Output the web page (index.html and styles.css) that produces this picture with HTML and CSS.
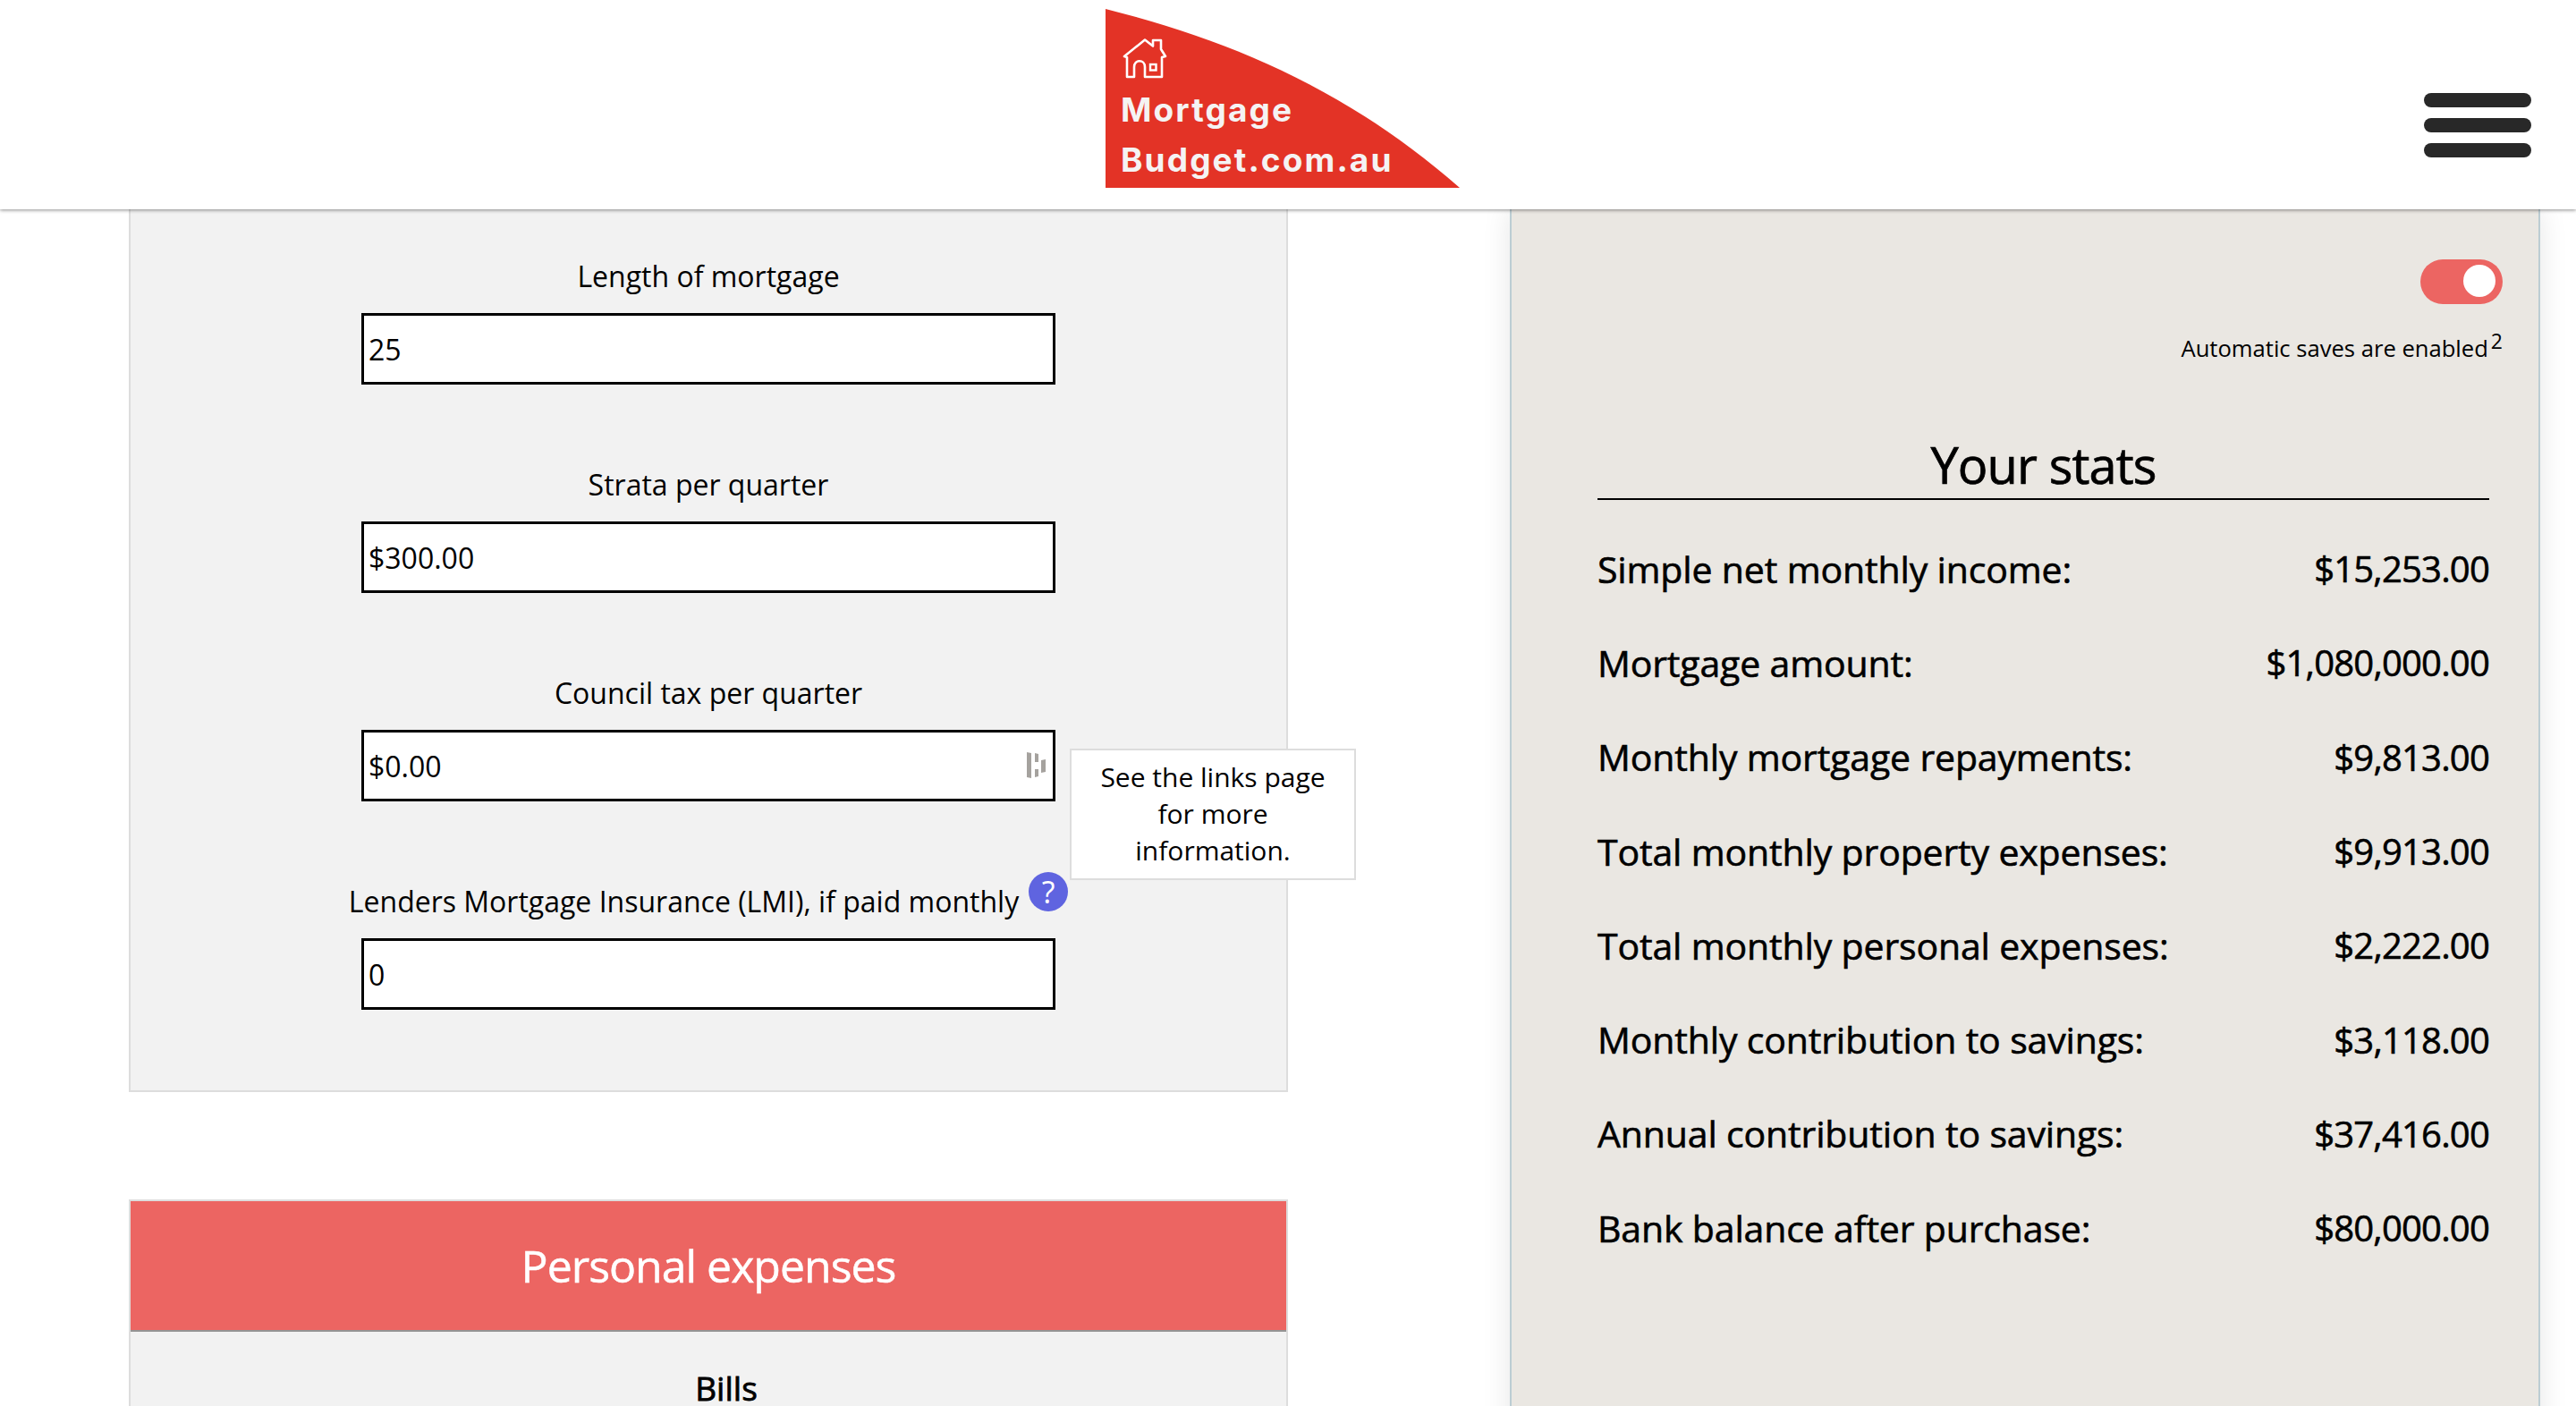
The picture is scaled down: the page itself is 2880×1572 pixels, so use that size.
FILE: index.html
```html
<!DOCTYPE html>
<html lang="en">
<head>
<meta charset="utf-8">
<title>Mortgage Budget</title>
<link rel="stylesheet" href="styles.css">
</head>
<body>
<header class="topbar">
  <a class="logo" href="#">
    <svg class="logo-shape" viewBox="0 0 396 200" aria-hidden="true"><path d="M0 0C140 35 270 90 396 200H0Z" fill="#e33326"/></svg>
    <svg class="logo-house" viewBox="0 0 50 46" aria-hidden="true"><path d="M2 21 25 2.500 34 9.500V3H43V13L48 21 44 22V44H25V33C25 24 13 24 13 33V44H5V22Z" fill="none" stroke="#fff" stroke-width="2.600" stroke-linejoin="round"/><rect x="31" y="30" width="6.500" height="6.500" fill="none" stroke="#fff" stroke-width="2.400"/></svg>
    <span class="logo-text">Mortgage<br>Budget.com.au</span>
  </a>
  <button class="burger" aria-label="Menu"><span></span><span></span><span></span></button>
</header>
<main class="layout">
  <section class="left-col">
    <div class="panel form-panel">
      <div class="field"><label>Length of mortgage</label><div class="input"><span>25</span></div></div>
      <div class="field"><label>Strata per quarter</label><div class="input"><span>$300.00</span></div></div>
      <div class="field"><label>Council tax per quarter</label><div class="input"><span>$0.00</span>
        <svg class="pw-icon" viewBox="0 0 22 30" aria-hidden="true"><path d="M0 0 5 1V29L0 28ZM9 1 13 2V11H9ZM9 19H13V27L9 28ZM16 9 21 8V22L16 23Z" fill="#a5a29e"/></svg>
      </div></div>
      <div class="field"><label>Lenders Mortgage Insurance (LMI), if paid monthly<span class="help">?</span></label><div class="input"><span>0</span></div></div>
    </div>
    <div class="panel expenses-panel">
      <h2 class="expenses-head">Personal expenses</h2>
      <h3 class="expenses-sub">Bills</h3>
    </div>
  </section>
  <aside class="stats-card">
    <div class="save-row">
      <span class="toggle"><span class="knob"></span></span>
      <p class="save-note">Automatic saves are enabled<sup>2</sup></p>
    </div>
    <h2 class="stats-title">Your stats</h2>
    <dl class="stats">
      <div class="stat"><dt>Simple net monthly income:</dt><dd>$15,253.00</dd></div>
      <div class="stat"><dt>Mortgage amount:</dt><dd>$1,080,000.00</dd></div>
      <div class="stat"><dt>Monthly mortgage repayments:</dt><dd>$9,813.00</dd></div>
      <div class="stat"><dt>Total monthly property expenses:</dt><dd>$9,913.00</dd></div>
      <div class="stat"><dt>Total monthly personal expenses:</dt><dd>$2,222.00</dd></div>
      <div class="stat"><dt>Monthly contribution to savings:</dt><dd>$3,118.00</dd></div>
      <div class="stat"><dt>Annual contribution to savings:</dt><dd>$37,416.00</dd></div>
      <div class="stat"><dt>Bank balance after purchase:</dt><dd>$80,000.00</dd></div>
    </dl>
  </aside>
</main>
<div class="tooltip">See the links page for more information.</div>
</body>
</html>
```

FILE: styles.css
```css
* { box-sizing: border-box; }
html, body { margin: 0; height: 1572px; overflow: hidden; background: #fff; }
body { font-family: "Open Sans", sans-serif; color: #000; position: relative; }

.topbar { height: 234px; background: #fff; box-shadow: 0 1px 4px rgba(0,0,0,.45); position: relative; z-index: 5; display: flex; justify-content: center; }
.logo { position: relative; width: 396px; height: 200px; margin: 10px 0 0 -12px; display: block; text-decoration: none; }
.logo-shape { display: block; width: 396px; height: 200px; }
.logo-house { position: absolute; left: 19px; top: 32px; width: 50px; height: 46px; }
.logo-text { position: absolute; left: 17px; top: 85px; font-family: Inter, sans-serif; font-weight: 700; font-size: 37px; letter-spacing: 2.100px; line-height: 56px; color: #f5f3f3; white-space: nowrap; }
.burger { position: absolute; left: 2710px; top: 104px; width: 120px; height: 72px; padding: 0; border: 0; background: none; display: flex; flex-direction: column; justify-content: space-between; }
.burger span { display: block; height: 16px; border-radius: 8px; background: #282828; }

.layout { display: flex; align-items: flex-start; padding-left: 144px; }
.left-col { width: 1296px; }
.panel { background: #f2f2f2; border: 2px solid #ddd; }
.form-panel { border-top: 0; height: 987px; padding-top: 53px; display: flex; flex-direction: column; align-items: center; gap: 90px; }
.field { width: 776px; display: flex; flex-direction: column; align-items: center; }
.field label { font-size: 32px; line-height: 44px; height: 44px; margin-bottom: 19px; white-space: nowrap; display: flex; }
.input { width: 776px; height: 80px; background: #fff; border: 3px solid #000; font-size: 32px; padding-left: 5px; display: flex; align-items: center; position: relative; }
.pw-icon { position: absolute; right: 7px; top: 22px; width: 22px; height: 30px; }
.help { width: 44px; height: 44px; margin: -11px 0 0 11px; border-radius: 50%; background: #5f64e0; color: #fff; font-size: 34px; line-height: 44px; text-align: center; }

.expenses-panel { margin-top: 120px; height: 400px; }
.expenses-head { margin: 0; height: 146px; background: #ec6562; border-bottom: 2px solid #949494; color: #fff; font-weight: 400; font-size: 50px; letter-spacing: -1px; -webkit-text-stroke: .5px #fff; text-align: center; line-height: 144px; }
.expenses-sub { margin: 38px 0 0; padding-left: 40px; font-size: 37px; line-height: 50px; font-weight: 400; -webkit-text-stroke: .8px #000; text-align: center; }

.stats-card { width: 1152px; height: 1500px; margin-left: 248px; background: #eae7e2; border: 2px solid #bccdd3; border-top: 0; box-shadow: 0 0 30px rgba(0,0,0,.1); padding: 56px 40px 0 96px; }
.save-row { display: flex; flex-direction: column; align-items: flex-end; }
.toggle { width: 92px; height: 50px; border-radius: 25px; background: #ec6562; position: relative; display: block; }
.knob { position: absolute; right: 8px; top: 6px; width: 36px; height: 36px; border-radius: 50%; background: #fff; }
.save-note { margin: 32px 0 0; font-size: 25.6px; line-height: 36px; }
.save-note sup { font-size: 23px; line-height: 0; vertical-align: 9px; margin-left: 3px; }
.stats-title { margin: 73px 15px 0 0; font-size: 56px; line-height: 76px; font-weight: 400; letter-spacing: -.9px; -webkit-text-stroke: .7px #000; text-align: center; border-bottom: 2px solid #000; }
.stats { margin: 0 15px 0 0; padding-top: 24px; }
.stat { display: flex; justify-content: space-between; height: 105.300px; align-items: center; -webkit-text-stroke: .6px #000; }
.stat dt { margin: 0; font-size: 41px; font-weight: 400; letter-spacing: -.15px; }
.stat dd { margin: 0; font-size: 40px; font-weight: 400; letter-spacing: -.8px; }

.tooltip { position: absolute; left: 1196px; top: 837px; width: 320px; height: 147px; z-index: 3; background: #fff; border: 2px solid #ddd; font-size: 30px; line-height: 41px; text-align: center; padding: 9px 24px; }
```
